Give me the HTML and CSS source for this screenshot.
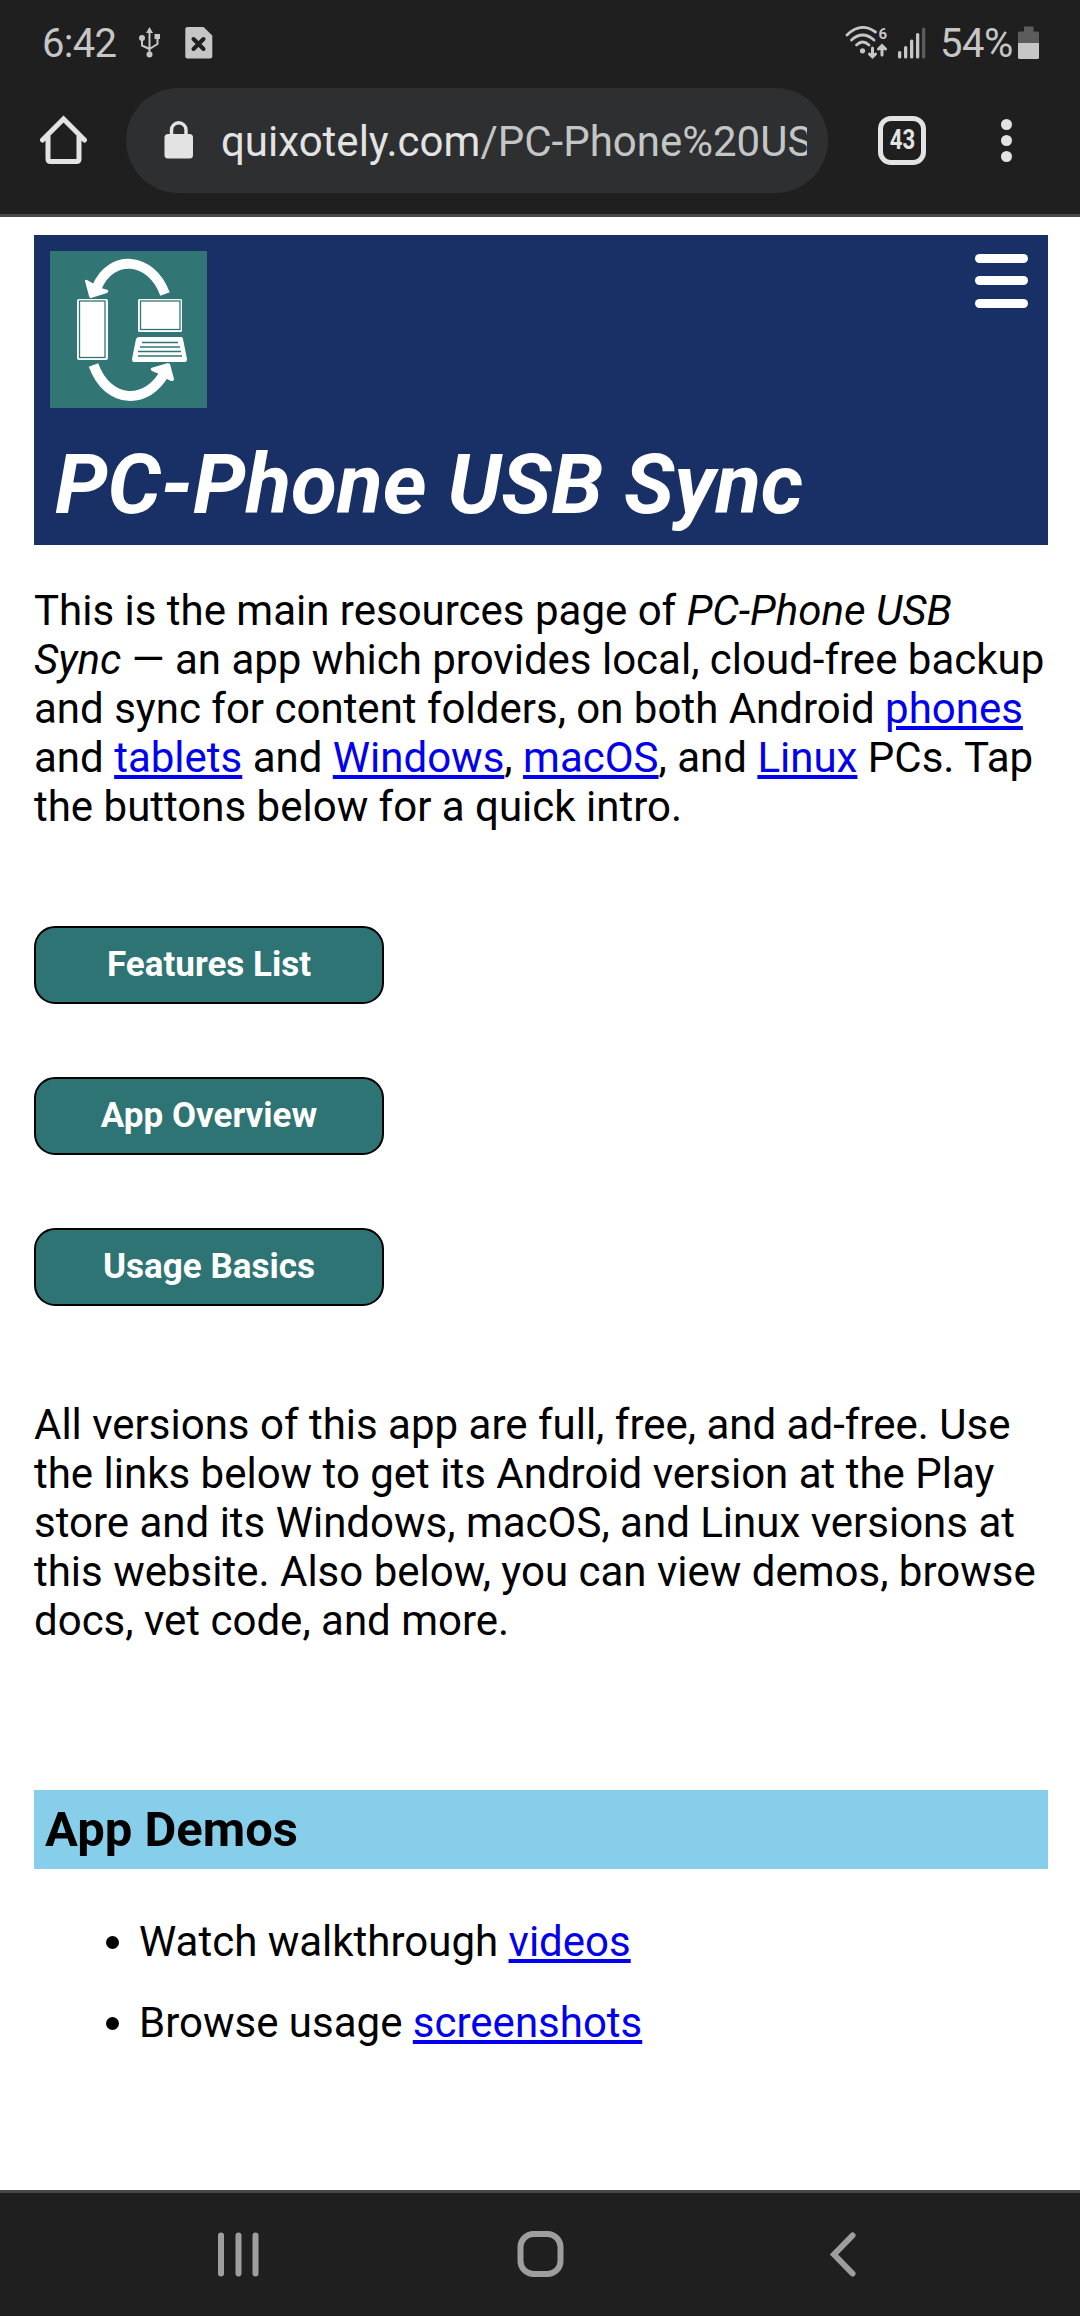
FILE: index.html
```html
<!DOCTYPE html>
<html lang="en">
<head>
  <meta charset="UTF-8">
  <title>PC-Phone USB Sync</title>
  <link rel="stylesheet" href="styles.css">
</head>
<body>

<div class="status-bar">
  <span class="clock">6:42</span>
  <svg class="usb" width="22" height="32" viewBox="0 0 22 32">
    <path d="M10.500 4V28M10.500 22L3 18.500V12M10.500 22L18.500 17V9" fill="none" stroke="#c6c6c6" stroke-width="2"/>
    <path d="M10.500 0L14 6H7Z"/>
    <circle cx="10.500" cy="27.500" r="3"/>
    <circle cx="3" cy="11" r="3"/>
    <rect x="15.500" y="7" width="5.500" height="5"/>
  </svg>
  <svg class="sim" width="28" height="32" viewBox="0 0 28 32">
    <path d="M2.500 0H18.500L27.300 8.500V29.500Q27.300 31.500 25 31.500H2.500Q0.300 31.500 0.300 29.500V2Q0.300 0 2.500 0Z"/>
    <path d="M8.500 12L18.500 22M18.500 12L8.500 22" stroke="#1f1f1f" stroke-width="4" stroke-linecap="round"/>
  </svg>
  <svg class="wifi" width="43" height="34" viewBox="0 0 43 34">
    <g fill="none" stroke="#c6c6c6" stroke-width="2.800" stroke-linecap="round">
      <path d="M2 9Q16 -4.500 30.500 6"/>
      <path d="M6.500 14Q17.500 4 29 14"/>
      <path d="M11.500 19Q17.500 13 24 19"/>
      <path d="M27.500 22V30M24.500 28L27.500 31L30.500 28M37 29V20M33.500 23L37 19.500L40.500 23" stroke-width="3"/>
    </g>
    <circle cx="17.500" cy="24.800" r="2.600"/>
    <text x="33.500" y="13" font-size="15" font-weight="700">6</text>
  </svg>
  <svg class="signal" width="28" height="32" viewBox="0 0 28 32">
    <rect x="0" y="24" width="3.300" height="7.500" rx="1.500"/>
    <rect x="6" y="19" width="3.300" height="12.500" rx="1.500"/>
    <rect x="12" y="12.500" width="3.300" height="19" rx="1.500"/>
    <rect x="18" y="6" width="3.300" height="25.500" rx="1.500"/>
    <rect x="24" y="0.500" width="3.300" height="31" rx="1.500" fill="#5c5c5c"/>
  </svg>
  <span class="percent">54%</span>
  <svg class="battery" width="22" height="34" viewBox="0 0 22 34">
    <path d="M6 0.500H15.500V5.500H19.500Q21 5.500 21 7V17.500H0V7Q0 5.500 1.500 5.500H6Z" fill="#5c5c5c"/>
    <path d="M0 17H21V31.500Q21 33 19.500 33H1.500Q0 33 0 31.500Z"/>
  </svg>
</div>

<div class="toolbar">
  <svg class="home" width="48" height="50" viewBox="0 0 48 50">
    <path d="M2.500 25L23.500 4L44.500 25M8 21V44Q8 46.500 10.500 46.500H36.500Q39 46.500 39 44V21" fill="none" stroke="#e3e3e3" stroke-width="5" stroke-linecap="round"/>
  </svg>
  <div class="address">
    <svg width="30" height="38" viewBox="0 0 30 38">
      <rect x="0.500" y="13" width="28.500" height="24.500" rx="3.500" fill="#e3e3e3"/>
      <path d="M7.500 15V9A7.200 7.200 0 0 1 22 9V15" fill="none" stroke="#e3e3e3" stroke-width="3.400"/>
    </svg>
    <div class="url">quixotely.com<span>/PC-Phone%20USB-Sync</span></div>
  </div>
  <div class="tabs"><span>43</span></div>
  <div class="dots"><i></i><i></i><i></i></div>
</div>

<main>
  <header>
    <div class="header-top">
      <svg class="logo" width="157" height="157" viewBox="0 0 157 157">
        <rect width="157" height="157" fill="#317675"/>
        <g fill="none" stroke="#fff">
          <path d="M47 36C61 3 101 5 115 43" stroke-width="10"/>
          <path d="M43.500 114C58 154 98 154 115 121" stroke-width="10"/>
        </g>
        <g fill="#fff">
          <path d="M35 30Q35 28 37 29L44 33L51 37L58 39Q59 41 57 42L41 47Q39 47 39 45Z"/>
          <path d="M118 112L101 117Q100 119 102 120L109 123L115 127L121 130Q124 130 124 128L120 113Z"/>
          <rect x="27" y="48" width="31" height="61" rx="2"/>
          <rect x="88" y="48" width="44" height="33" rx="1.500"/>
          <path d="M89 86H131Q133 86 133 88L137 108Q137 111 135 111H84Q82 111 82 108L86 88Q87 86 89 86Z"/>
        </g>
        <g fill="none" stroke="#317675" stroke-width="1.300">
          <rect x="29.500" y="50" width="25.500" height="56.500"/>
          <rect x="90.500" y="50" width="39.500" height="28.500"/>
          <path d="M92 91.500H128M90 96H130M88 100.500H131M88 105H132"/>
        </g>
      </svg>
      <div class="menu"><i></i><i></i><i></i></div>
    </div>
    <h1>PC-Phone USB Sync</h1>
  </header>

  <p>This is the main resources page of <em>PC-Phone USB Sync</em> — an app which provides local, cloud-free backup and sync for content folders, on both Android <a href="#">phones</a> and <a href="#">tablets</a> and <a href="#">Windows</a>, <a href="#">macOS</a>, and <a href="#">Linux</a> PCs. Tap the buttons below for a quick intro.</p>

  <div class="buttons">
    <button>Features List</button>
    <button>App Overview</button>
    <button>Usage Basics</button>
  </div>

  <p>All versions of this app are full, free, and ad-free. Use the links below to get its Android version at the Play store and its Windows, macOS, and Linux versions at this website. Also below, you can view demos, browse docs, vet code, and more.</p>

  <h3>App Demos</h3>
  <ul>
    <li>Watch walkthrough <a href="#">videos</a></li>
    <li>Browse usage <a href="#">screenshots</a></li>
  </ul>
</main>

<nav>
  <svg width="44" height="48" viewBox="0 0 44 48">
    <path d="M4 4.500V42.500M21.500 4.500V42.500M38.500 4.500V42.500"/>
  </svg>
  <svg width="48" height="48" viewBox="0 0 48 48">
    <rect x="3.500" y="3" width="40" height="40" rx="13"/>
  </svg>
  <svg width="44" height="48" viewBox="0 0 44 48">
    <path d="M32.500 4.500L14 23.500L32.500 42.500"/>
  </svg>
</nav>

</body>
</html>
```

FILE: styles.css
```css
* {
  box-sizing: border-box;
}

body {
  margin: 0;
  height: 2316px;
  display: flex;
  flex-direction: column;
  overflow: hidden;
  background: #fff;
  color: #000;
  font-family: Roboto, "Liberation Sans", sans-serif;
  font-size: 42px;
  line-height: 49px;
}

svg {
  display: block;
  flex: none;
}

/* Phone status bar */
.status-bar {
  display: flex;
  align-items: center;
  height: 86px;
  padding: 0 40px 0 42px;
  background: #1f1f1f;
  color: #c6c6c6;
  fill: #c6c6c6;
  font-size: 40px;
}
.clock {
  width: 97px;
  padding-top: 1px;
  letter-spacing: -.7px;
}
.sim {
  margin-left: 24px;
}
.wifi {
  margin-left: auto;
}
.signal {
  margin-left: 10px;
}
.percent {
  width: 74px;
  margin-left: 14px;
  padding-top: 1px;
  letter-spacing: -.5px;
}
.battery {
  margin-left: 4px;
}

/* Browser toolbar */
.toolbar {
  display: flex;
  align-items: center;
  height: 131px;
  padding: 0 67px 20px 40px;
  background: #1f1f1f;
  border-bottom: 3px solid #474747;
}
.address {
  display: flex;
  align-items: center;
  width: 702px;
  height: 105px;
  margin-left: 38px;
  padding: 0 21px 0 38px;
  border-radius: 53px;
  background: #2e2f31;
}
.url {
  flex: 1;
  margin-left: 27px;
  padding-top: 3px;
  overflow: hidden;
  white-space: nowrap;
  color: #e3e3e3;
}
.url span {
  color: #c4c6c5;
}
.tabs {
  display: flex;
  justify-content: center;
  align-items: center;
  width: 48px;
  height: 49px;
  margin-left: 50px;
  border: 5px solid #e3e3e3;
  border-radius: 13px;
  color: #e3e3e3;
  font-size: 27px;
  font-weight: 700;
  line-height: 30px;
}
.tabs span {
  transform: scaleX(.82);
}
.dots {
  display: flex;
  flex-direction: column;
  gap: 5px;
  margin-left: auto;
  margin-right: 1px;
}
.dots i {
  width: 11px;
  height: 11px;
  border-radius: 50%;
  background: #e3e3e3;
}

/* Page */
main {
  flex: 1;
  padding: 18px 32px 0 34px;
}
header {
  height: 310px;
  padding: 16px 20px 0 16px;
  background: #193066;
  color: #fff;
}
.header-top {
  display: flex;
  justify-content: space-between;
}
.menu {
  display: flex;
  flex-direction: column;
  gap: 13.500px;
  padding-top: 2.500px;
}
.menu i {
  width: 53px;
  height: 9px;
  border-radius: 5px;
  background: #fff;
}
h1 {
  margin: 28px 0 0 5px;
  font-size: 84px;
  font-style: italic;
  line-height: 98px;
}
p {
  margin: 41px 0 0;
}
a {
  color: #0000ee;
  text-decoration-thickness: 4px;
  text-underline-offset: 3px;
}
.buttons {
  display: flex;
  flex-direction: column;
  align-items: flex-start;
  gap: 73px;
  margin: 95px 0 94px;
}
button {
  width: 350px;
  height: 78px;
  padding: 0 0 1px;
  border: 2px solid #000;
  border-radius: 21px;
  background: #2f7474;
  color: #fff;
  font-family: inherit;
  font-size: 35px;
  font-weight: 700;
}
h3 {
  margin: 145px 0 48px;
  padding: 11px;
  background: #87ceeb;
  font-size: 49px;
  line-height: 57px;
}
ul {
  margin: 0;
  padding-left: 105px;
}
li {
  margin-bottom: 32px;
}

/* Android navigation */
nav {
  display: flex;
  justify-content: space-between;
  height: 126px;
  padding: 38px 216px 0 217px;
  background: #1f1f1f;
  border-top: 3px solid #474747;
  fill: none;
  stroke: #9e9e9e;
  stroke-width: 6;
  stroke-linecap: round;
}
```
